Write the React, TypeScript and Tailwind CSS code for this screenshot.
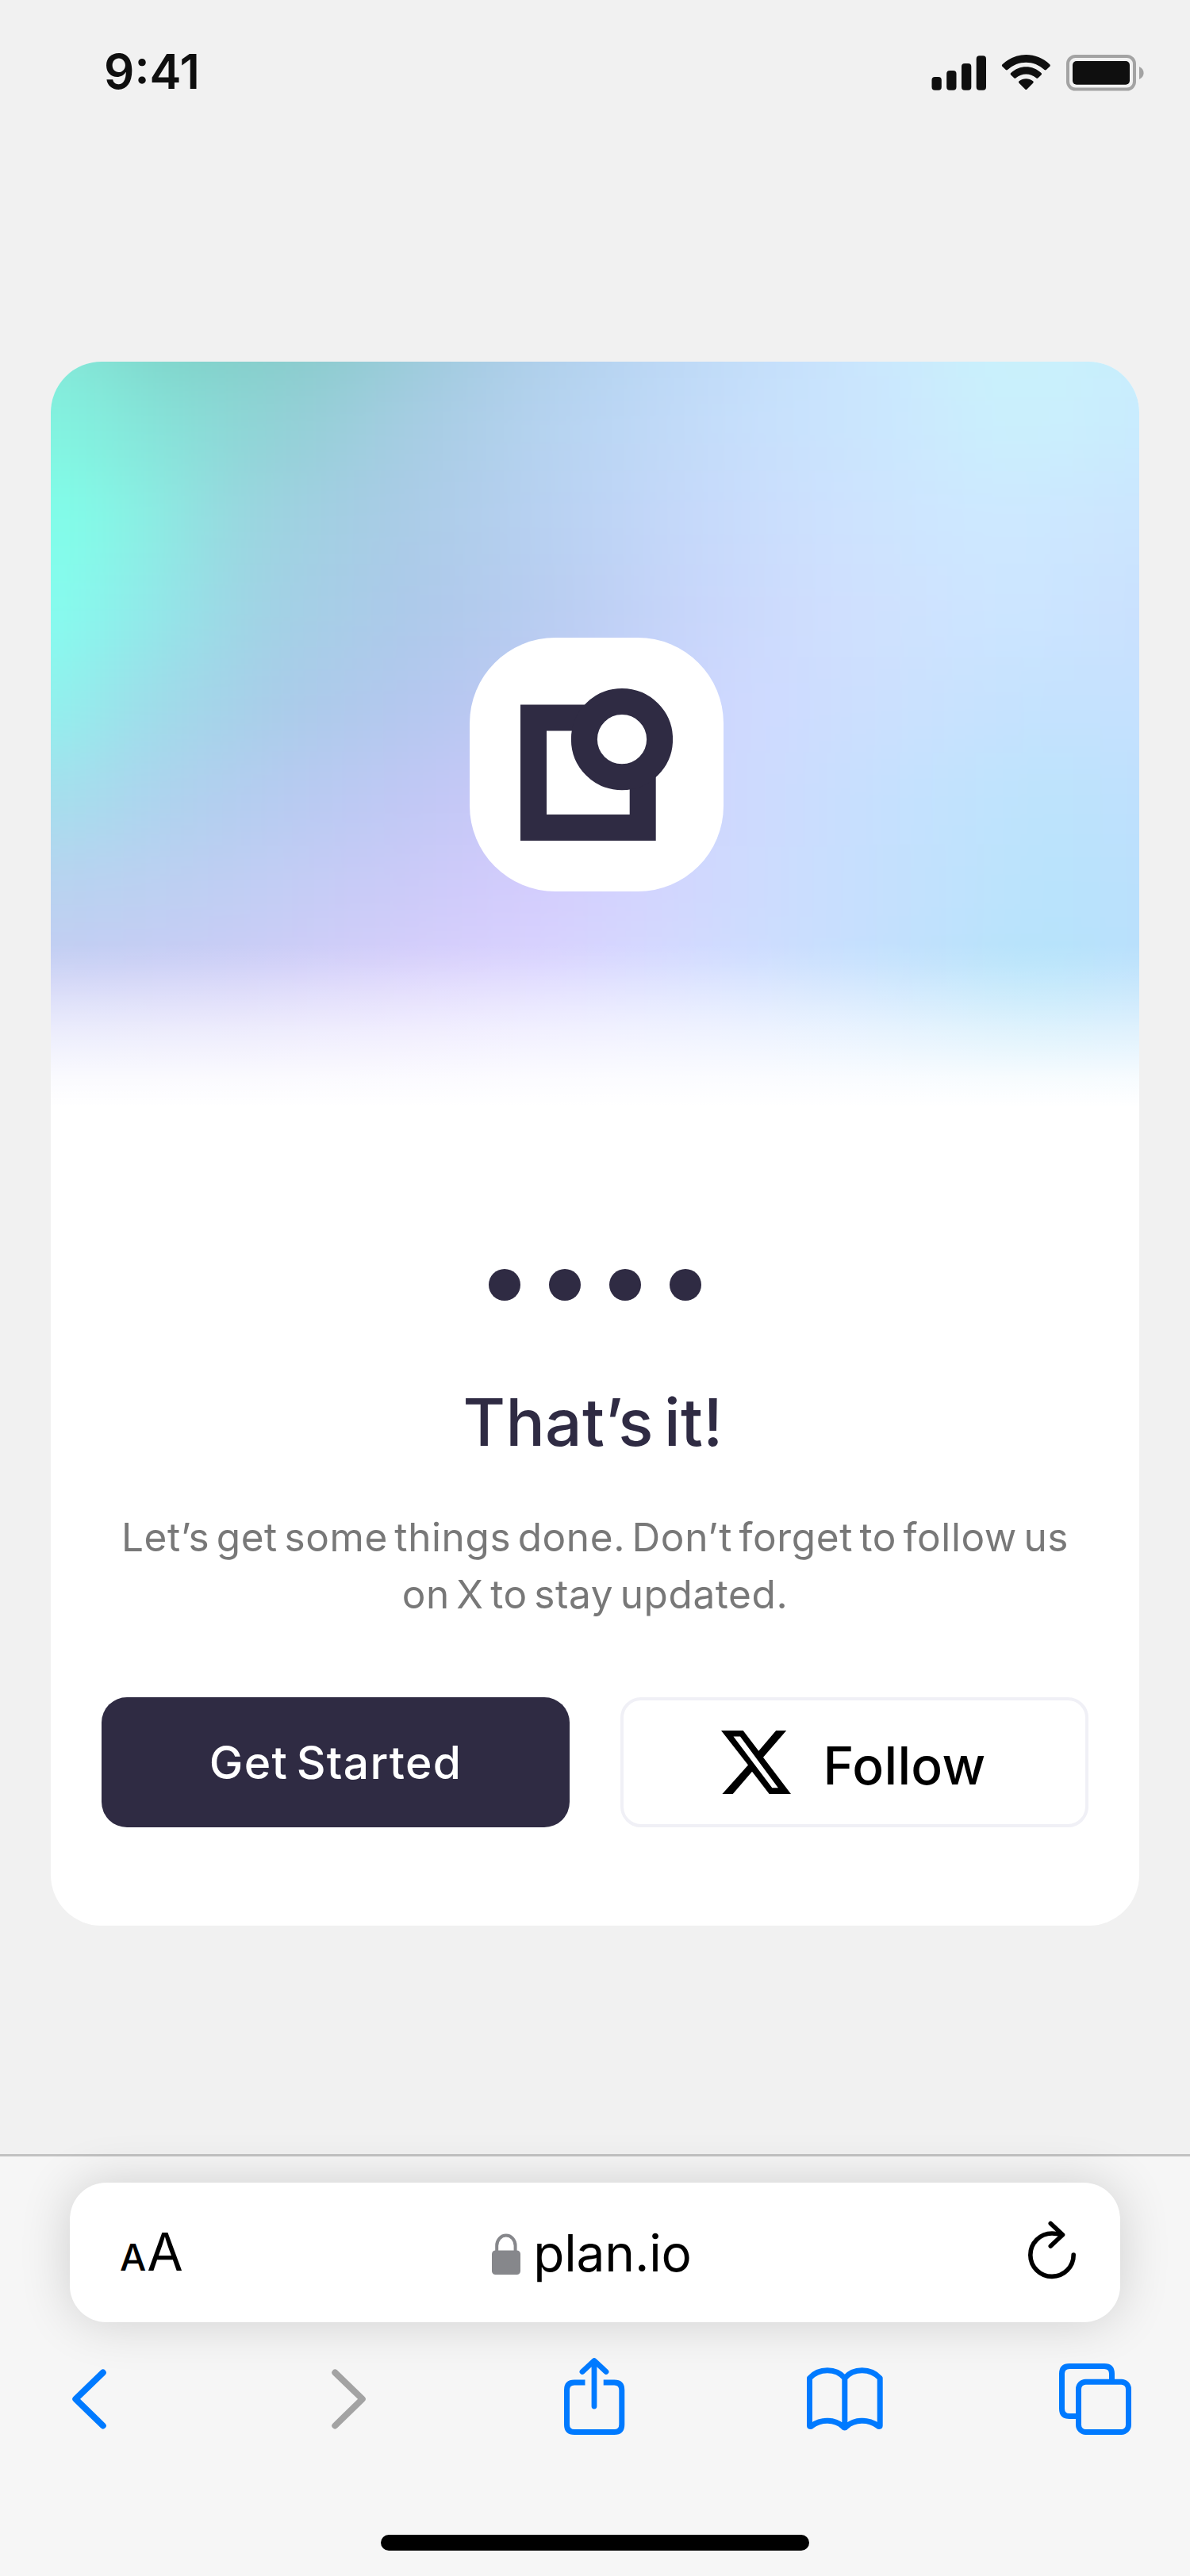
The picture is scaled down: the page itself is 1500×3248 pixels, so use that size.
const meshRows = [
  "h-[190px] bg-[linear-gradient(90deg,#86e6d8_12%,#7dd0c6_20%,#8acacc_31%,#a9cce5_43%,#bbd7f5_55%,#cbe6fe_69%,#c8f3fa_79%,#c8edfd_90%)]",
  "h-[118px] bg-[linear-gradient(90deg,#82f4e0_12%,#86e2d8_19%,#92d0d5_28%,#a8cce4_38%,#b9d5f3_49%,#c7dffc_61%,#cbe8fe_72%,#caf1fc_80%,#c9ebfe_90%)]",
  "h-[118px] bg-[linear-gradient(90deg,#80ffea_12%,#8aefe3_18%,#9ad5df_25%,#a8cbe5_35%,#b6d0f0_45%,#c5d8fa_56%,#cde1fe_66%,#cde9ff_78%,#cbe5fe_90%)]",
  "h-[118px] bg-[linear-gradient(90deg,#84ffef_11%,#90eae9_18%,#a1d2e4_26%,#adc9ea_37%,#b9cdf1_47%,#c8d6fb_57%,#d0dffe_67%,#cce6ff_80%,#cae0fe_90%)]",
  "h-[118px] bg-[linear-gradient(90deg,#8ff4ee_11%,#9edde9_18%,#aacbe9_28%,#b6c7f0_39%,#c3ccf7_49%,#cfd9ff_60%,#cbe1fe_72%,#c4e3fe_82%,#c6e0fe_90%)]",
  "h-[118px] bg-[linear-gradient(90deg,#a5dfed_12%,#b0d0ee_21%,#b9caf2_30%,#c4c7f6_40%,#cecffb_50%,#cedafe_61%,#c4e1fe_72%,#bce4fc_82%,#bfdffd_90%)]",
  "h-[118px] bg-[linear-gradient(90deg,#b9d2f0_12%,#c0cef3_24%,#cbcaf8_36%,#d4ccfd_45%,#d3d5fe_54%,#cbddfe_64%,#bfe2fd_76%,#b8e4fb_82%,#bbdffd_90%)]",
  "h-[80px] bg-[linear-gradient(90deg,#c7ccf4_12%,#ceccf7_25%,#d9d0fc_37%,#dbd4ff_46%,#d3dcff_57%,#c5e0fe_69%,#b5e5fa_81%,#bbe0fd_90%)]",
  "h-[320px] bg-[linear-gradient(90deg,#cdcff8_12%,#d2cef9_25%,#dad2fd_37%,#dddaff_46%,#d8dfff_57%,#c5e0fe_69%,#a6def8_81%,#a9d9fb_90%)]",
];

function Artwork() {
  return (
    <div className="relative h-[944px] overflow-hidden rounded-t-[64px]">
      <div className="absolute -inset-x-[200px] -top-[170px] flex flex-col blur-[44px]">
        {meshRows.map((row) => (
          <div key={row} className={row} />
        ))}
      </div>
      <div className="absolute inset-x-0 bottom-0 h-[210px] bg-[linear-gradient(180deg,rgba(255,255,255,0)_0%,rgba(255,255,255,0.1)_12%,rgba(255,255,255,0.6)_50%,rgba(255,255,255,0.9)_80%,#fff_98%)]" />
      <div className="relative mx-auto mt-[348px] flex size-[320px] translate-x-[2px] items-center justify-center rounded-[108px] bg-white">
        <svg className="size-[192px]" viewBox="0 0 192 192" fill="none" stroke="#2f2b43" strokeWidth="33">
          <path d="M16.5 37H154.2V175.5H16.5Z" />
          <circle cx="128" cy="64.2" r="47.6" fill="#fff" />
        </svg>
      </div>
    </div>
  );
}

function StatusBar() {
  return (
    <header className="flex h-[456px] items-start justify-between pt-[60px] pr-[56px] pl-[131px] text-[#0f0f0f]">
      <span className="text-[60px] leading-[60px] font-semibold">9:41</span>
      <svg className="mt-[5px] h-[60px] w-[272px]" viewBox="1172 65 272 60" fill="currentColor">
        <rect x="1174.5" y="97" width="12.3" height="16.7" rx="4" />
        <rect x="1193.2" y="89" width="12.3" height="24.7" rx="4" />
        <rect x="1212" y="80" width="12.3" height="33.7" rx="4" />
        <rect x="1230.7" y="70.3" width="12.3" height="43.4" rx="4" />
        <path d="M1263.4 81.2C1280.5 65 1306.1 65 1323.3 81.2C1324 82 1324 83 1323.3 83.7L1318.8 88C1318.2 88.6 1317.2 88.6 1316.5 88C1303.5 75.5 1283.1 75.5 1270.1 88C1269.4 88.6 1268.4 88.6 1267.8 88L1263.4 83.7C1262.7 83 1262.7 82 1263.4 81.2Z" />
        <path d="M1274.2 92C1285 81.5 1301.7 81.5 1312.5 92C1313.2 92.7 1313.2 93.7 1312.5 94.4L1308.5 98.3C1307.8 99 1306.8 99 1306.1 98.3C1298.7 92 1288 92 1280.6 98.3C1279.9 99 1278.9 99 1278.2 98.3L1274.2 94.4C1273.5 93.7 1273.5 92.7 1274.2 92Z" />
        <path d="M1284.6 102.3C1289.5 98.2 1297.2 98.2 1302.1 102.3C1302.9 103 1302.9 104 1302.2 104.7L1294.5 112.5C1293.8 113.2 1292.9 113.2 1292.2 112.5L1284.5 104.7C1283.8 104 1283.8 103 1284.6 102.3Z" />
        <rect x="1346" y="71" width="84" height="41.5" rx="9.5" fill="none" stroke="#a3a3a3" strokeWidth="4" />
        <rect x="1352" y="77" width="72" height="29.7" rx="5" />
        <path d="M1436 84V100C1439.5 98.5 1441.6 95.5 1441.6 92C1441.6 88.5 1439.5 85.5 1436 84Z" fill="#a3a3a3" />
      </svg>
    </header>
  );
}

function XLogo() {
  return (
    <svg className="h-[80px] w-[88px]" viewBox="0 0 88 80" fill="none">
      <path fillRule="evenodd" fill="#000" d="M0 0H27.7L47.3 25.8L69.2 0H82.2L53 33.8L88 80H60.7L39 51.8L14.7 80H1.4L34 43.5ZM15.5 7.4L64.3 72.2H71.9L24 7.4Z" />
    </svg>
  );
}

function Card() {
  return (
    <main className="mx-[64px] h-[1972px] rounded-[64px] bg-white">
      <Artwork />
      <div className="mt-[200px] flex justify-center gap-[36px]">
        {[0, 1, 2, 3].map((step) => (
          <span key={step} className="size-[40px] rounded-full bg-[#2f2b43]" />
        ))}
      </div>
      <h1 className="mt-[104px] pr-[5px] text-center text-[82px] leading-[100px] font-medium tracking-[0.3px] [word-spacing:-9px] text-[#2f2b43]">
        That’s it!
      </h1>
      <p className="mt-[58px] text-center text-[49.5px] leading-[72px] tracking-[0.6px] whitespace-nowrap [word-spacing:-6px] text-[#787878]">
        Let’s get some things done. Don’t forget to follow us
        <br />
        on X to stay updated.
      </p>
      <div className="mx-[64px] mt-[94px] flex gap-[64px]">
        <button className="h-[164px] w-[590px] rounded-[32px] bg-[#2f2b43] pt-[2px] text-[57px] font-medium tracking-[1.3px] [word-spacing:-6px] text-white">
          Get Started
        </button>
        <button className="flex h-[164px] w-[590px] items-center justify-center gap-[41px] rounded-[26px] border-4 border-[#f0f0f6] pr-[3px] text-black">
          <XLogo />
          <span className="pt-[8px] text-[66px] leading-[80px] font-medium tracking-[0.3px]">Follow</span>
        </button>
      </div>
    </main>
  );
}

function AddressBar() {
  return (
    <div className="mx-[88px] flex h-[176px] items-center justify-between rounded-[46px] bg-white pr-[54px] pl-[63px] text-black shadow-[0_0_64px_rgba(0,0,0,0.16)]">
      <span className="flex w-[200px] items-baseline pt-[5px] leading-[80px]">
        <span className="text-[47px] font-medium">A</span>
        <span className="ml-px text-[66px]">A</span>
      </span>
      <span className="flex items-center pr-[17px]">
        <svg className="mt-[4px] h-[52px] w-[36px]" viewBox="0 0 36 52">
          <rect x="0" y="21.5" width="36" height="30.5" rx="4.5" fill="#86878b" />
          <path d="M6.2 23V15.5A11.7 13 0 0 1 29.6 15.5V23" fill="none" stroke="#86878b" strokeWidth="4" />
        </svg>
        <span className="ml-[16px] pt-[1px] text-[64px] leading-[80px] tracking-[-0.2px]">plan.io</span>
      </span>
      <span className="flex w-[200px] justify-end">
        <svg className="h-[80px] w-[64px] overflow-visible" viewBox="1294 2799 64 80" fill="none" stroke="#000" strokeWidth="5.6" strokeLinecap="round" strokeLinejoin="round">
          <path d="M1353.2 2842A27.2 27.2 0 1 1 1326 2815Q1332 2815 1338 2816.6" />
          <path d="M1324.3 2802.5L1339.5 2816.8L1324.3 2831" />
        </svg>
      </span>
    </div>
  );
}

function Toolbar() {
  return (
    <nav className="mt-[36px] h-[120px]">
      <svg className="h-[120px] w-full" viewBox="0 2964 1500 120" fill="none" stroke="#007aff" strokeWidth="7">
        <path d="M129.8 2991.5L95.3 3024.8L129.8 3058.5" strokeWidth="8" strokeLinecap="round" strokeLinejoin="round" />
        <path d="M422.3 2991.5L456.8 3024.8L422.3 3058.5" stroke="#a3a3a3" strokeWidth="8" strokeLinecap="round" strokeLinejoin="round" />
        <path d="M734 2990.5L749 2976.5L764 2990.5M749 2977V3034" strokeWidth="6.8" strokeLinecap="round" strokeLinejoin="round" />
        <path d="M737.5 3004H724Q714.5 3004 714.5 3013.5V3057Q714.5 3066.5 724 3066.5H774.3Q783.8 3066.5 783.8 3057V3013.5Q783.8 3004 774.3 3004H760.7" />
        <path d="M1020.5 2998.5C1032 2985.5 1054 2985.5 1064.8 2998.5C1075.5 2985.5 1097.5 2985.5 1109.2 2998.5V3058.5C1109.2 3059.7 1107.7 3059.7 1106.5 3058.7C1095 3050 1077 3050 1067 3059.5Q1064.8 3062.5 1062.5 3059.5C1052.5 3050 1034.5 3050 1023.2 3058.7C1022 3059.7 1020.5 3059.7 1020.5 3058.5ZM1064.8 2998.5V3060" strokeLinejoin="round" />
        <path d="M1401.5 3001V2993Q1401.5 2983.5 1392 2983.5H1348Q1338.5 2983.5 1338.5 2993V3037Q1338.5 3046.5 1348 3046.5H1357" />
        <rect x="1359.5" y="3003.2" width="63" height="63.3" rx="9" />
      </svg>
    </nav>
  );
}

export default function App() {
  return (
    <div className="flex h-[3248px] w-[1500px] flex-col overflow-hidden bg-[#f1f1f1] font-['Inter',sans-serif]">
      <StatusBar />
      <Card />
      <footer className="mt-[288px] flex h-[532px] flex-col border-t-[3px] border-[#c2c2c2] bg-[#f6f6f6] pt-[33px]">
        <AddressBar />
        <Toolbar />
        <div className="mx-auto mt-[112px] h-[20px] w-[540px] rounded-full bg-black" />
      </footer>
    </div>
  );
}
